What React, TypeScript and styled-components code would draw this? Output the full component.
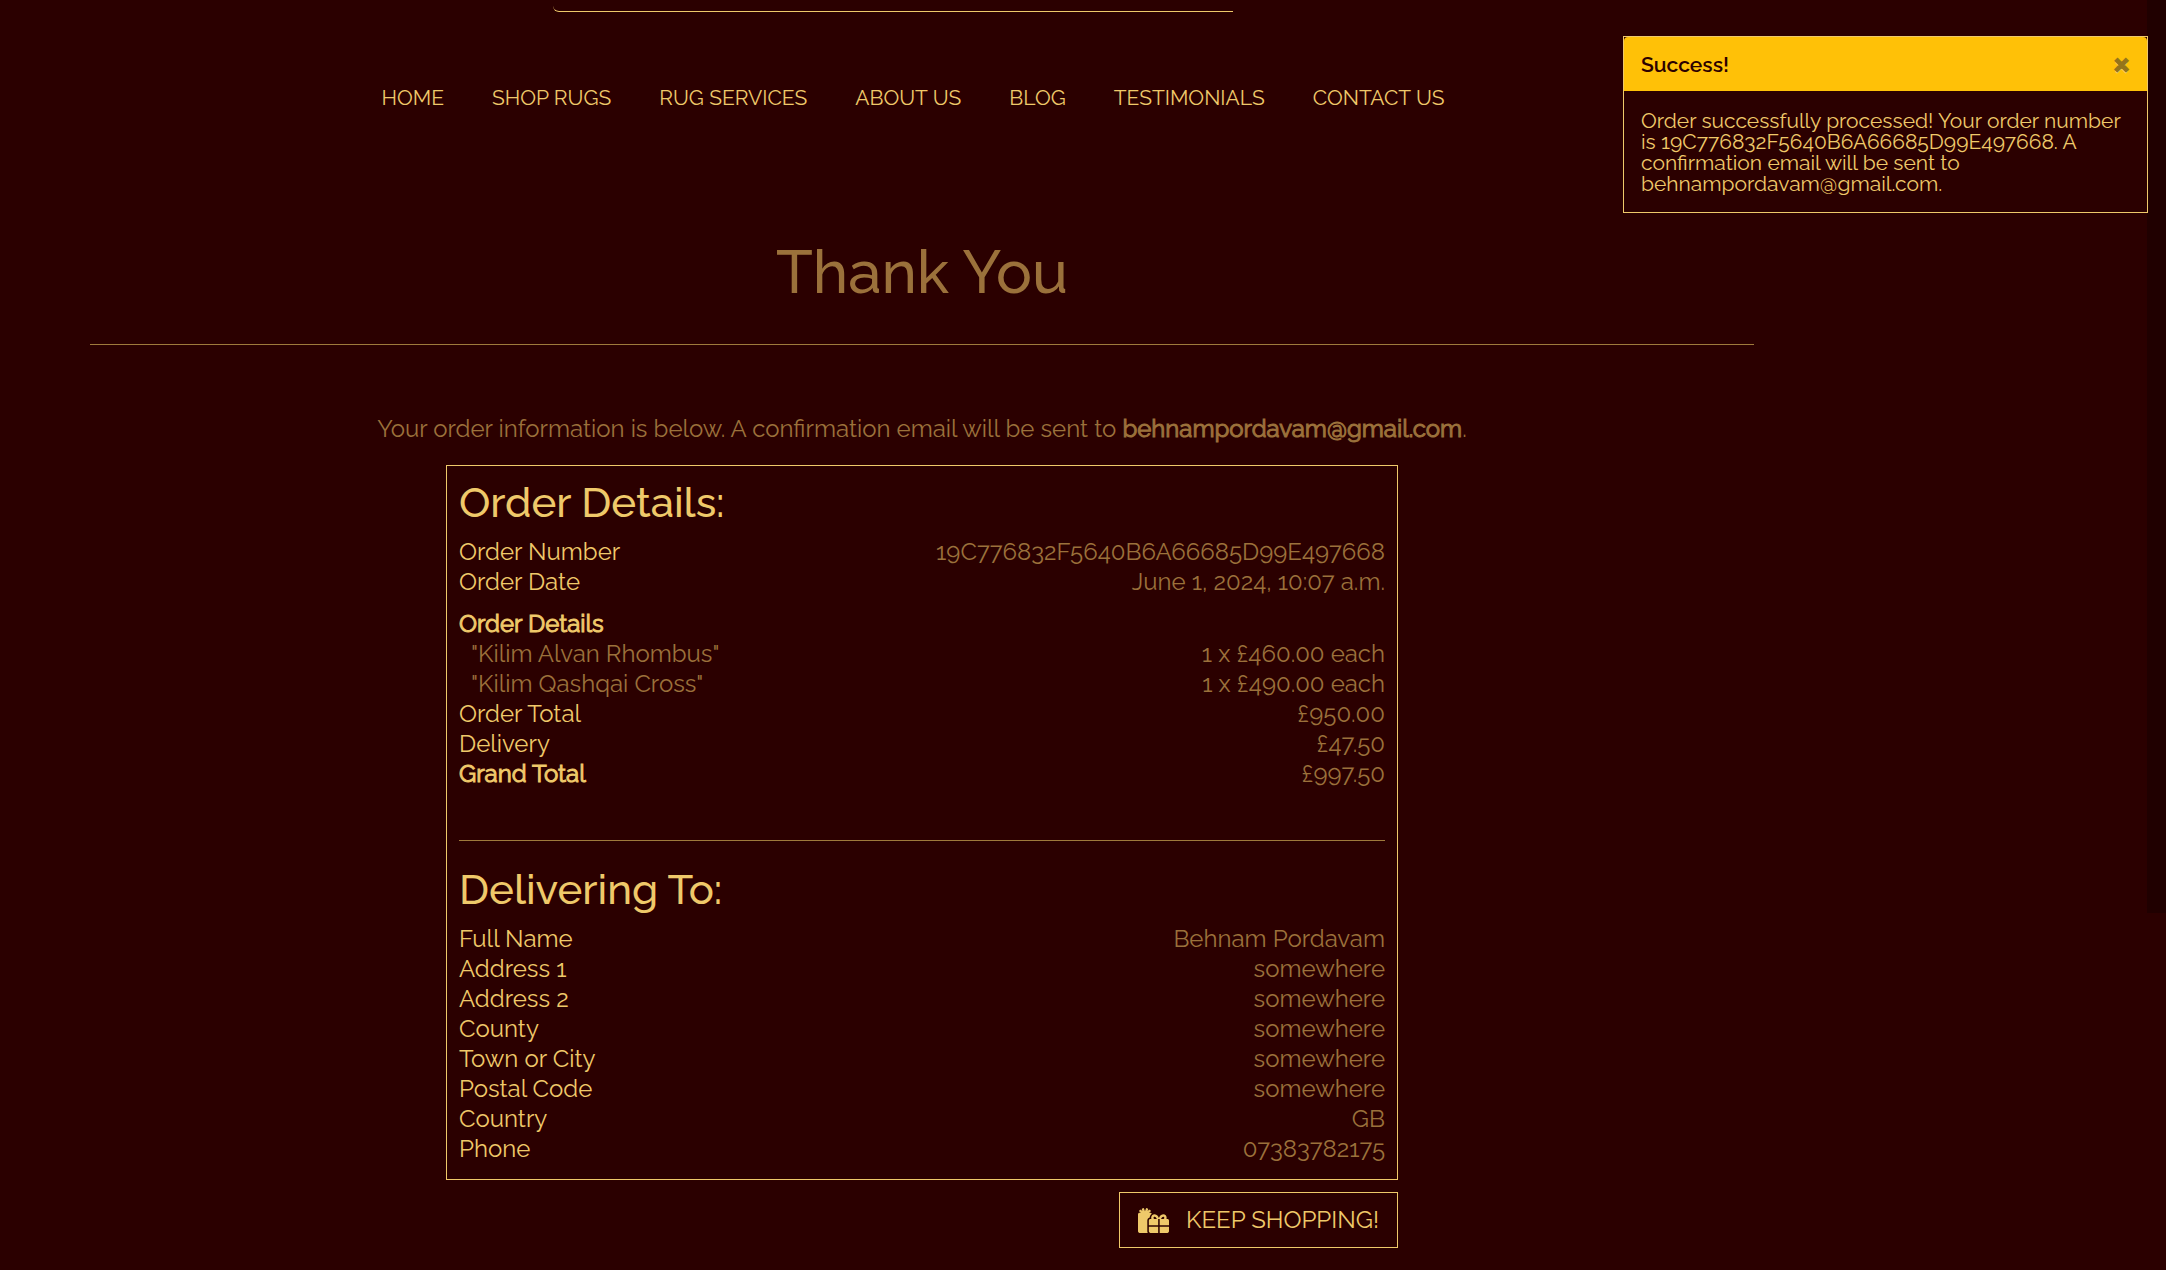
import React from "react";
import styled, { createGlobalStyle } from "styled-components";
import { FaGifts } from "react-icons/fa";

const gold = "#efc96a";
const bronze = "#9b713b";
const ground = "#2b0000";

const GlobalStyle = createGlobalStyle`
  *, *::before, *::after { box-sizing: border-box; }
  body {
    margin: 0;
    background: ${ground};
    color: ${bronze};
    font: 400 24px/30px Raleway, Lato, sans-serif;
  }
`;

const Page = styled.div`
  display: grid;
  grid-template-columns: minmax(0, 1fr) 303px 19px;
  align-items: start;
`;

const Main = styled.div`
  display: flex;
  flex-direction: column;
  align-items: center;
  padding: 0 90px 22px;
`;

const SearchBox = styled.input`
  width: 680px;
  max-width: 100%;
  height: 12px;
  margin-right: 58px;
  padding: 0;
  border: 0;
  border-bottom: 1px solid ${gold};
  border-radius: 0 0 0 6px;
  background: transparent;
  color: ${gold};
  outline: none;
`;

const Nav = styled.nav`
  display: flex;
  flex-wrap: wrap;
  justify-content: center;
  gap: 0 48px;
  margin: 71px 18px 0 0;
`;

const NavLink = styled.a`
  color: ${gold};
  font-size: 21px;
  text-decoration: none;
`;

const Title = styled.h1`
  margin: 123px 0 0;
  font-size: 60px;
  font-weight: 500;
  line-height: 72px;
`;

const Rule = styled.hr<{ $top: number; $bottom: number }>`
  width: 100%;
  height: 1px;
  margin: ${(p) => p.$top}px 0 ${(p) => p.$bottom}px;
  border: 0;
  background: #9f7a3c;
`;

const Intro = styled.p`
  margin: 0 0 21px;
`;

const Strong = styled.strong`
  font-weight: 400;
  -webkit-text-stroke: 1px currentColor;
`;

const OrderColumn = styled.div`
  display: flex;
  flex-direction: column;
  align-items: flex-end;
  gap: 12px;
  width: 952px;
  max-width: 100%;
`;

const OrderCard = styled.section`
  width: 100%;
  padding: 12px 12px 15px;
  border: 1px solid ${gold};
`;

const Heading = styled.h2`
  margin: 0 0 9px;
  color: ${gold};
  font-size: 42px;
  font-weight: 500;
  line-height: 50px;
`;

const List = styled.dl`
  margin: 0;
`;

const Row = styled.div`
  display: flex;
  justify-content: space-between;
`;

const Term = styled.dt<{ $item?: boolean }>`
  padding-left: ${(p) => (p.$item ? 12 : 0)}px;
  color: ${(p) => (p.$item ? bronze : gold)};
`;

const Value = styled.dd`
  margin: 0;
`;

const ListTitle = styled.h3`
  margin: 12px 0 0;
  color: ${gold};
  font-size: 24px;
  font-weight: 400;
  line-height: 30px;
`;

const ShopLink = styled.a`
  display: flex;
  align-items: center;
  gap: 17px;
  height: 56px;
  padding: 0 18px;
  border: 1px solid ${gold};
  color: ${gold};
  text-decoration: none;

  svg {
    width: 31px;
    height: 25px;
  }
`;

const Toast = styled.aside`
  position: absolute;
  top: 36px;
  right: 18px;
  width: 525px;
  border: 1px solid ${gold};
  background: ${ground};
  color: ${gold};
  font-size: 21px;
  line-height: 21px;
`;

const ToastHeader = styled.header`
  display: flex;
  align-items: center;
  justify-content: space-between;
  height: 54px;
  padding: 0 18px 0 17px;
  border-radius: 4px 4px 0 0;
  background: #ffc107;
  color: ${ground};
`;

const ToastTitle = styled.strong`
  font-weight: 600;
`;

const CloseButton = styled.button`
  padding: 0;
  border: 0;
  background: none;
  color: #95751a;
  font: 900 26px/26px Lato, sans-serif;
  -webkit-text-stroke: 2px #95751a;
  text-shadow: 0 2px 0 #ffe48c;
  cursor: pointer;
`;

const ToastBody = styled.p`
  margin: 0;
  padding: 19px 18px 18px 17px;
`;

const ScrollTrack = styled.div`
  grid-column: 3;
  height: 913px;
  background: #200000;
`;

const links = ["Home", "Shop Rugs", "Rug Services", "About Us", "Blog", "Testimonials", "Contact Us"];

type Entry = { label: string; value: string; item?: boolean; strong?: boolean };

const summary: Entry[] = [
  { label: "Order Number", value: "19C776832F5640B6A66685D99E497668" },
  { label: "Order Date", value: "June 1, 2024, 10:07 a.m." },
];

const lines: Entry[] = [
  { label: '"Kilim Alvan Rhombus"', value: "1 x £460.00 each", item: true },
  { label: '"Kilim Qashqai Cross"', value: "1 x £490.00 each", item: true },
  { label: "Order Total", value: "£950.00" },
  { label: "Delivery", value: "£47.50" },
  { label: "Grand Total", value: "£997.50", strong: true },
];

const delivery: Entry[] = [
  { label: "Full Name", value: "Behnam Pordavam" },
  { label: "Address 1", value: "somewhere" },
  { label: "Address 2", value: "somewhere" },
  { label: "County", value: "somewhere" },
  { label: "Town or City", value: "somewhere" },
  { label: "Postal Code", value: "somewhere" },
  { label: "Country", value: "GB" },
  { label: "Phone", value: "07383782175" },
];

function Entries({ entries }: { entries: Entry[] }) {
  return (
    <List>
      {entries.map((e) => (
        <Row key={e.label}>
          <Term $item={e.item}>{e.strong ? <Strong>{e.label}</Strong> : e.label}</Term>
          <Value>{e.value}</Value>
        </Row>
      ))}
    </List>
  );
}

export default function App() {
  return (
    <>
      <GlobalStyle />
      <Page>
        <Main>
          <SearchBox type="search" aria-label="Search" />
          <Nav>
            {links.map((l) => (
              <NavLink key={l} href="#">{l.toUpperCase()}</NavLink>
            ))}
          </Nav>
          <Title>Thank You</Title>
          <Rule $top={36} $bottom={69} />
          <Intro>
            Your order information is below. A confirmation email will be sent to{" "}
            <Strong>behnampordavam@gmail.com</Strong>.
          </Intro>
          <OrderColumn>
            <OrderCard>
              <Heading>Order Details:</Heading>
              <Entries entries={summary} />
              <ListTitle><Strong>Order Details</Strong></ListTitle>
              <Entries entries={lines} />
              <Rule $top={51} $bottom={24} />
              <Heading>Delivering To:</Heading>
              <Entries entries={delivery} />
            </OrderCard>
            <ShopLink href="#">
              <FaGifts aria-hidden />
              KEEP SHOPPING!
            </ShopLink>
          </OrderColumn>
        </Main>
        <ScrollTrack />
      </Page>
      <Toast role="status">
        <ToastHeader>
          <ToastTitle>Success!</ToastTitle>
          <CloseButton type="button" aria-label="Close">×</CloseButton>
        </ToastHeader>
        <ToastBody>
          Order successfully processed! Your order number is 19C776832F5640B6A66685D99E497668. A
          confirmation email will be sent to behnampordavam@gmail.com.
        </ToastBody>
      </Toast>
    </>
  );
}
